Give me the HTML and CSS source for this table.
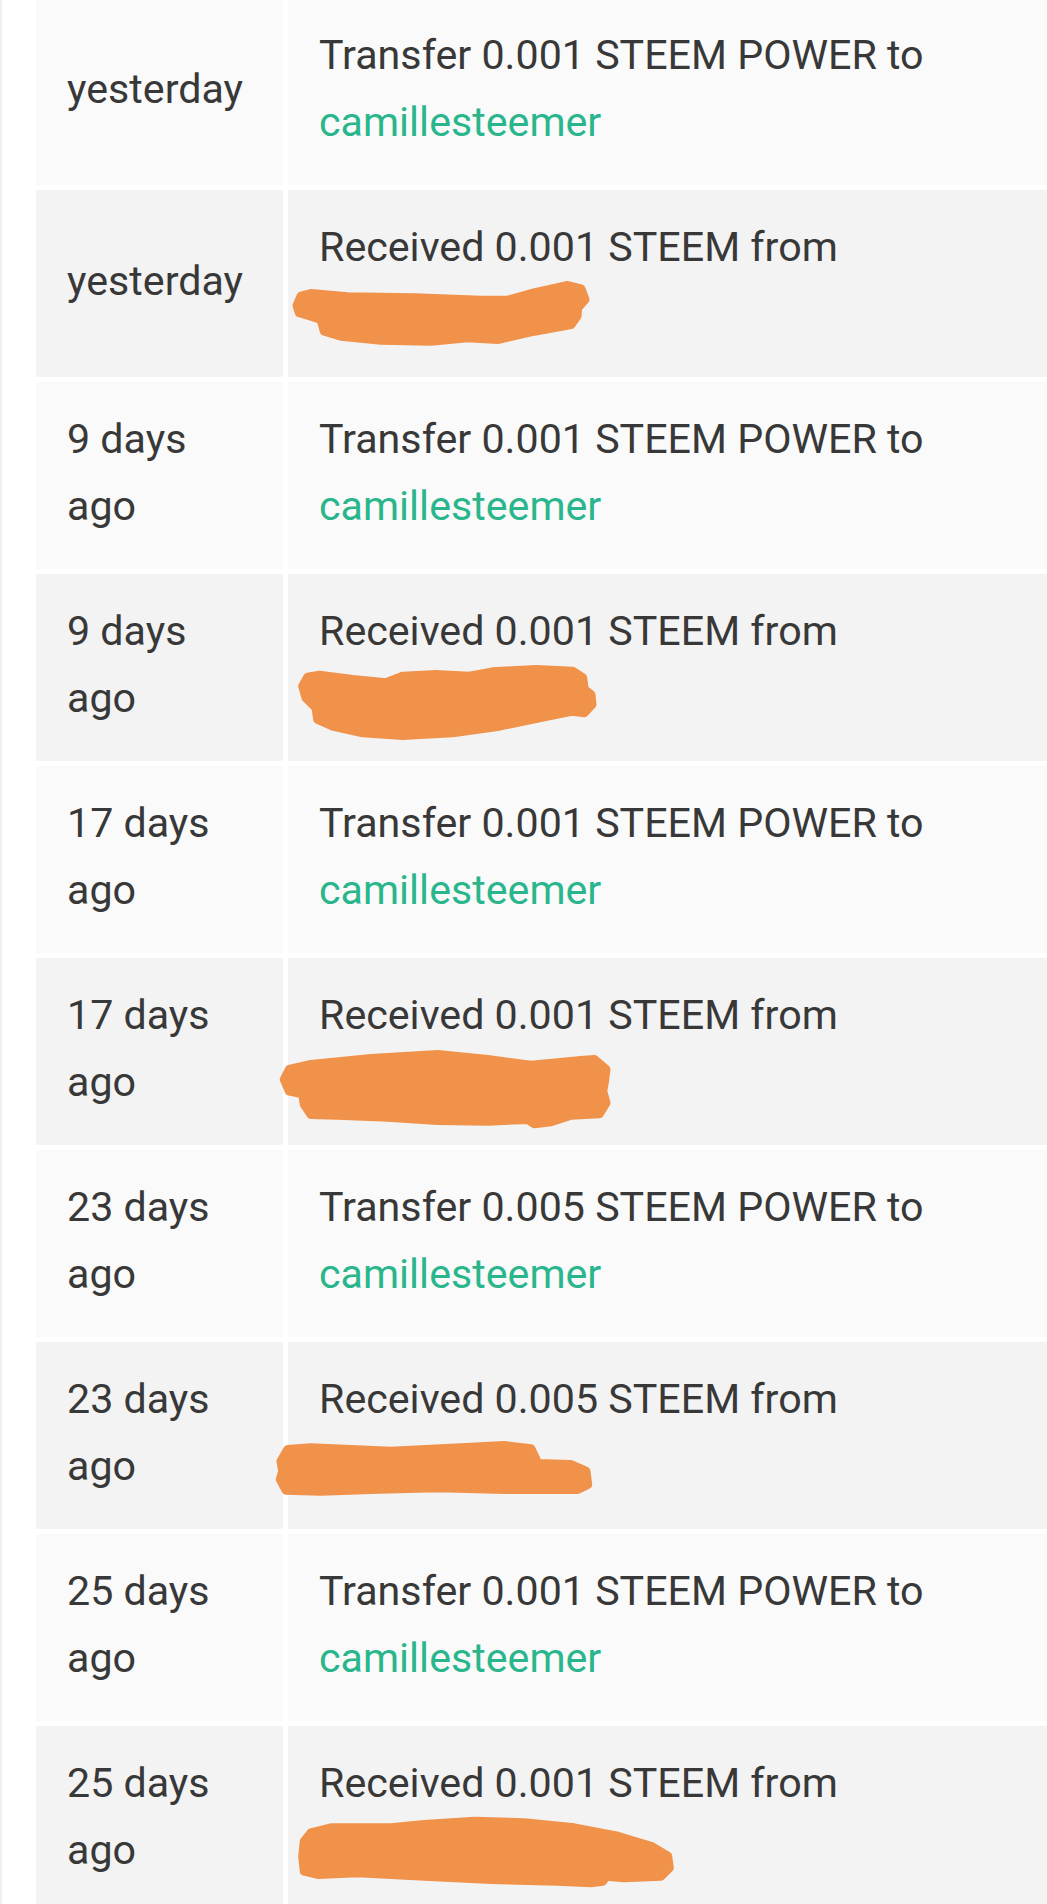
FILE: index.html
```html
<!DOCTYPE html>
<html lang="en">
<head>
<meta charset="utf-8">
<title>Wallet history</title>
<link rel="stylesheet" href="styles.css">
</head>
<body>
<div class="page">
<table class="history">
<tbody>
<tr class="row-light">
  <td class="when">yesterday</td>
  <td class="what">Transfer 0.001 STEEM POWER to<br><a class="user" href="#">camillesteemer</a></td>
</tr>
<tr class="row-dark">
  <td class="when">yesterday</td>
  <td class="what">Received 0.001 STEEM from
    <div class="redact"><svg viewBox="-40 -10 420 90"><path class="scribble" d="M-22 22.5 L-18 13.2 L-8 10.5 L28.7 13.8 L95.3 14.8 L162 17.2 L188.7 17.2 L215 9.8 L248.7 2.5 L262 5.8 L266 16.5 L258.7 24.8 L258 33.2 L252 41.5 L215.3 48.2 L178.7 56.5 L148.7 54.8 L112 58.2 L62 57.2 L22 53.2 L5.3 48.2 L2 36.5 L-8 33.2 L-19.7 29.8 Z"/></svg></div>
  </td>
</tr>
<tr class="row-light">
  <td class="when">9 days ago</td>
  <td class="what">Transfer 0.001 STEEM POWER to<br><a class="user" href="#">camillesteemer</a></td>
</tr>
<tr class="row-dark">
  <td class="when">9 days ago</td>
  <td class="what">Received 0.001 STEEM from
    <div class="redact"><svg viewBox="-40 -10 420 90"><path class="scribble" d="M-16.3 19.2 L-11.3 10.2 L0.3 8.2 L33.7 12.5 L67 15.8 L83.7 9.2 L117 7.5 L150.3 9.2 L173.7 4.8 L217 2.5 L253.7 4.2 L263.7 10.8 L265.3 22.5 L272 27.5 L273 37.5 L265.3 45.8 L253.7 44.2 L220.3 50.8 L180.3 59.2 L133.7 65.8 L83.7 68.5 L43.7 65.8 L13.7 59.2 L-1.3 52.5 L-3 40.8 L-13 30.8 Z"/></svg></div>
  </td>
</tr>
<tr class="row-light">
  <td class="when">17 days ago</td>
  <td class="what">Transfer 0.001 STEEM POWER to<br><a class="user" href="#">camillesteemer</a></td>
</tr>
<tr class="row-dark">
  <td class="when">17 days ago</td>
  <td class="what">Received 0.001 STEEM from
    <div class="redact"><svg viewBox="-40 -10 420 90"><path class="scribble" d="M-34.7 28.5 L-29.7 18.5 L-8 13.5 L52 7.5 L118.7 3.5 L168.7 8.5 L212 14.2 L238.7 11.8 L262 9.5 L275.3 8.5 L287 18.5 L285.3 31.8 L283.7 40.2 L287 51.8 L280.3 62.8 L252 64.2 L232 70.8 L215.3 72.8 L208.7 68.5 L168.7 70.2 L118.7 69.5 L68.7 66.2 L18.7 64.2 L-8 63.5 L-14.7 53.5 L-16.3 42.8 L-29.7 40.2 Z"/></svg></div>
  </td>
</tr>
<tr class="row-light">
  <td class="when">23 days ago</td>
  <td class="what">Transfer 0.005 STEEM POWER to<br><a class="user" href="#">camillesteemer</a></td>
</tr>
<tr class="row-dark">
  <td class="when">23 days ago</td>
  <td class="what">Received 0.005 STEEM from
    <div class="redact"><svg viewBox="-40 -10 420 90"><path class="scribble" d="M-38 26.2 L-31.3 14.5 L-8 12.8 L72 16.2 L142 12.8 L185.3 10.5 L212 13.8 L217 24.5 L218.7 28.5 L252 29.5 L267 36.2 L268.7 49.5 L258.7 54.5 L185.3 54.5 L118.7 52.8 L52 54.5 L2 56.2 L-33 55.2 L-38.7 44.5 L-36.3 36.2 Z"/></svg></div>
  </td>
</tr>
<tr class="row-light">
  <td class="when">25 days ago</td>
  <td class="what">Transfer 0.001 STEEM POWER to<br><a class="user" href="#">camillesteemer</a></td>
</tr>
<tr class="row-dark">
  <td class="when">25 days ago</td>
  <td class="what">Received 0.001 STEEM from
    <div class="redact"><svg viewBox="-40 -10 420 90"><path class="scribble" d="M-14.7 22.2 L-8 13.8 L12 8.8 L72 8.8 L105.3 5.5 L155.3 2.2 L205.3 3.8 L255.3 8.8 L298.7 17.2 L332 27.2 L348.7 37.2 L350.3 48.8 L342 57.2 L305.3 58.8 L287 57.2 L283.7 62.2 L272 63.8 L238.7 62.2 L172 60.5 L105.3 57.2 L38.7 53.8 L-1.3 55.5 L-14.7 52.2 L-16.3 37.2 Z"/></svg></div>
  </td>
</tr>
</tbody>
</table>
</div>
</body>
</html>
```
FILE: styles.css
```css
html, body {
  margin: 0;
  padding: 0;
  background: #ffffff;
  overflow: hidden;
}

.page {
  border-left: 2px solid #f0f0f0;
  min-height: 1904px;
  font-family: Roboto, "Noto Sans", "Liberation Sans", sans-serif;
  font-size: 41.2px;
  line-height: 67px;
  color: #383838;
}

.history {
  border-collapse: separate;
  border-spacing: 5px;
  margin-top: -7px;
  margin-left: 29px;
  width: 1120px;
}

.history td {
  padding: 24px 31px 29px 31px;
  vertical-align: middle;
  text-align: left;
}

.history td.when {
  width: 185px;
}

.row-light td {
  background: #fafafa;
}

.row-dark td {
  background: #f3f3f3;
}

.user {
  color: #2ab68c;
  text-decoration: none;
}

.redact {
  position: relative;
  height: 67px;
}

.redact svg {
  position: absolute;
  left: -40px;
  top: -8px;
  width: 420px;
  height: 90px;
  overflow: visible;
}

.scribble {
  fill: #f1924b;
  stroke: #f1924b;
  stroke-width: 9;
  stroke-linejoin: round;
}
```
